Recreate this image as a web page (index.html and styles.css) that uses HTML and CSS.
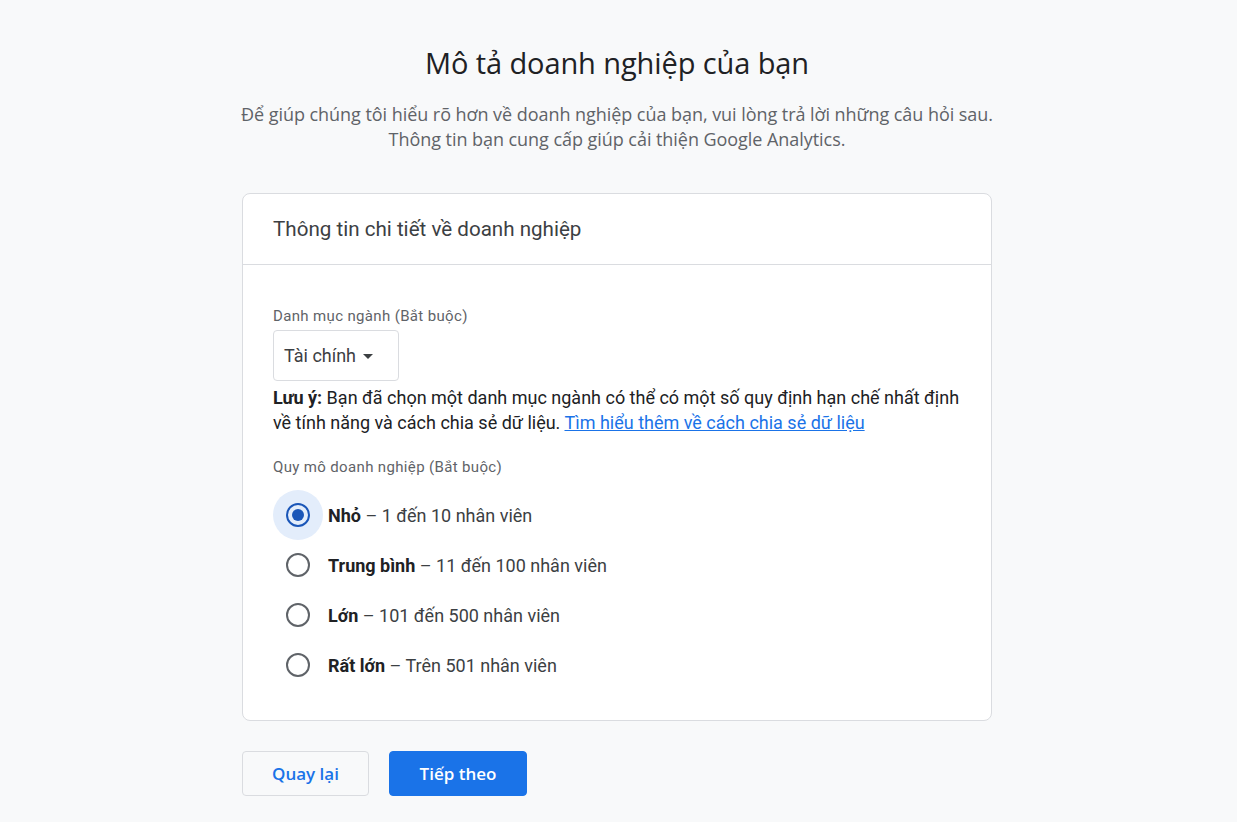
FILE: index.html
```html
<!DOCTYPE html>
<html lang="vi">
<head>
<meta charset="utf-8">
<title>Mô tả doanh nghiệp của bạn</title>
<link rel="stylesheet" href="styles.css">
</head>
<body>
<main class="page">
  <h1 class="title">Mô tả doanh nghiệp của bạn</h1>
  <p class="subtitle">Để giúp chúng tôi hiểu rõ hơn về doanh nghiệp của bạn, vui lòng trả lời những câu hỏi sau.<br>Thông tin bạn cung cấp giúp cải thiện Google Analytics.</p>

  <section class="card">
    <div class="card-header">Thông tin chi tiết về doanh nghiệp</div>
    <div class="card-body">
      <div class="field-label">Danh mục ngành (Bắt buộc)</div>
      <div class="select">
        <span>Tài chính</span>
        <span class="caret"></span>
      </div>
      <p class="note"><b>Lưu ý:</b> Bạn đã chọn một danh mục ngành có thể có một số quy định hạn chế nhất định về tính năng và cách chia sẻ dữ liệu. <a href="#">Tìm hiểu thêm về cách chia sẻ dữ liệu</a></p>

      <div class="field-label size-label">Quy mô doanh nghiệp (Bắt buộc)</div>
      <div class="radios">
        <div class="radio-row">
          <span class="radio-box checked"><span class="radio"><span class="dot"></span></span></span>
          <span class="radio-text"><b>Nhỏ</b> – 1 đến 10 nhân viên</span>
        </div>
        <div class="radio-row">
          <span class="radio-box"><span class="radio"></span></span>
          <span class="radio-text"><b>Trung bình</b> – 11 đến 100 nhân viên</span>
        </div>
        <div class="radio-row">
          <span class="radio-box"><span class="radio"></span></span>
          <span class="radio-text"><b>Lớn</b> – 101 đến 500 nhân viên</span>
        </div>
        <div class="radio-row">
          <span class="radio-box"><span class="radio"></span></span>
          <span class="radio-text"><b>Rất lớn</b> – Trên 501 nhân viên</span>
        </div>
      </div>
    </div>
  </section>

  <div class="actions">
    <button class="btn btn-outline">Quay lại</button>
    <button class="btn btn-primary">Tiếp theo</button>
  </div>
</main>
</body>
</html>
```

FILE: styles.css
```css
html, body {
  margin: 0;
  padding: 0;
  background: #f8f9fa;
}

body {
  font-family: Roboto, "Liberation Sans", Arial, sans-serif;
  color: #202124;
  padding-right: 3px;
}

.page {
  width: 750px;
  margin: 0 auto;
  padding-top: 42px;
  display: flex;
  flex-direction: column;
}

.title {
  margin: 0;
  text-align: center;
  font-family: "Open Sans", Roboto, sans-serif;
  font-weight: 400;
  font-size: 29px;
  line-height: 42px;
  color: #202124;
  letter-spacing: -0.1px;
}

.subtitle {
  margin: 18px -20px 0;
  text-align: center;
  font-family: "Open Sans", Roboto, sans-serif;
  font-size: 18px;
  line-height: 25px;
  color: #5f6368;
  letter-spacing: -0.05px;
}

.card {
  margin-top: 41px;
  background: #fff;
  border: 1px solid #dadce0;
  border-radius: 8px;
}

.card-header {
  padding: 21px 30px 21px;
  font-size: 20.6px;
  line-height: 28px;
  color: #3c4043;
  border-bottom: 1px solid #dadce0;
}

.card-body {
  padding: 41px 30px 30px;
}

.field-label {
  font-size: 15px;
  line-height: 20px;
  color: #5f6368;
  letter-spacing: 0.35px;
}

.select {
  margin-top: 4px;
  width: 126px;
  height: 51px;
  box-sizing: border-box;
  border: 1px solid #dadce0;
  border-radius: 4px;
  padding: 0 0 0 10px;
  display: flex;
  align-items: center;
  gap: 7px;
  font-size: 18px;
  color: #3c4043;
}

.caret {
  width: 0;
  height: 0;
  border-left: 5px solid transparent;
  border-right: 5px solid transparent;
  border-top: 5px solid #3c4043;
  margin-top: 1px;
}

.note {
  margin: 4px -4px 0 0;
  font-size: 18px;
  line-height: 25px;
  letter-spacing: 0;
  color: #202124;
}

.note b {
  font-weight: 700;
}

.note a {
  color: #1a73e8;
  text-decoration: underline;
}

.size-label {
  margin-top: 22px;
}

.radios {
  margin-top: 13px;
  display: flex;
  flex-direction: column;
}

.radio-row {
  display: flex;
  align-items: center;
  height: 50px;
}

.radio-box {
  width: 50px;
  height: 50px;
  border-radius: 50%;
  display: flex;
  align-items: center;
  justify-content: center;
  flex: none;
}

.radio-box.checked {
  background: #e3edfb;
}

.radio {
  width: 24px;
  height: 24px;
  box-sizing: border-box;
  border: 2px solid #5f6368;
  border-radius: 50%;
  display: flex;
  align-items: center;
  justify-content: center;
}

.checked .radio {
  border-color: #1a56b8;
}

.dot {
  width: 12px;
  height: 12px;
  border-radius: 50%;
  background: #1a56b8;
}

.radio-text {
  margin-left: 5px;
  font-size: 18px;
  color: #3c4043;
}

.radio-text b {
  font-weight: 700;
  color: #202124;
}

.actions {
  margin-top: 30px;
  display: flex;
  gap: 20px;
}

.btn {
  height: 45px;
  box-sizing: border-box;
  border-radius: 4px;
  font-family: "Open Sans", Roboto, sans-serif;
  font-size: 17px;
  font-weight: 600;
  cursor: pointer;
}

.btn-outline {
  width: 127px;
  background: #f8f9fa;
  border: 1px solid #dadce0;
  color: #1a73e8;
}

.btn-primary {
  width: 138px;
  background: #1a73e8;
  border: 1px solid #1a73e8;
  color: #fff;
}
```
